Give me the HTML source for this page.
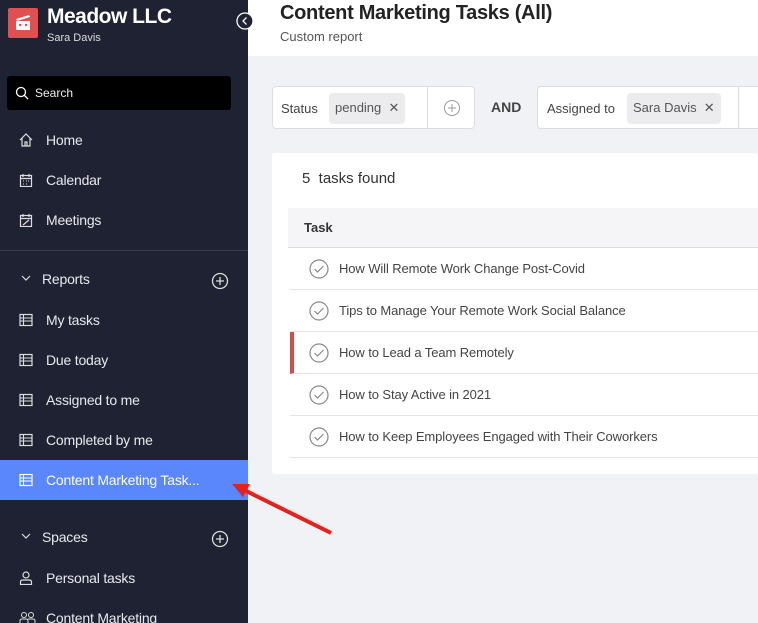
<!DOCTYPE html>
<html style="width:758px;height:623px;overflow:hidden"><head><style>
*{box-sizing:border-box;margin:0;padding:0}
body{width:758px;height:623px;overflow:hidden;font-family:"Liberation Sans",sans-serif;background:#f1f2f6;position:relative}
.sb{position:absolute;left:0;top:0;width:248px;height:623px;background:#1f2232;color:#e8e9ee;overflow:hidden}
.logo{position:absolute;left:8px;top:8px;width:30px;height:30px;background:#e05050;border-radius:2px}
.t1{position:absolute;left:47px;top:5px;font-size:21px;font-weight:bold;color:#fff;letter-spacing:-0.5px}
.t2{position:absolute;left:47px;top:32px;font-size:11px;color:#ddd}
.search{position:absolute;left:7px;top:76px;width:224px;height:34px;background:#000;border-radius:3px;font-size:12px;color:#eee;padding:10px 0 0 28px}
.it{position:absolute;left:0;width:248px;height:40px;font-size:14px;color:#e8e9ee;padding:12px 0 0 46px;letter-spacing:-0.2px}
.ic{position:absolute;left:19px;top:13px}
.sep{position:absolute;left:0;top:250px;width:248px;height:1px;background:#3a3d4c}
.hdr{position:absolute;left:248px;top:0;width:510px;height:56px;background:#fff}
.ttl{position:absolute;left:280px;top:2px;font-size:20px;font-weight:bold;color:#222;letter-spacing:-0.3px}
.sub{position:absolute;left:280px;top:29px;font-size:13px;color:#555}
.fb{position:absolute;top:86px;height:43px;background:#fff;border:1px solid #ddd;border-radius:4px;font-size:13px;color:#444}
.chip{position:absolute;top:6px;height:31px;background:#ececee;border-radius:4px;padding:7px 6px;color:#555}
.card{position:absolute;left:272px;top:153px;width:486px;height:321px;background:#fff;border-radius:3px}
.row{position:absolute;left:290px;width:468px;height:42px;border-bottom:1px solid #e4e4e4;font-size:13px;color:#444;padding:13px 0 0 49px;letter-spacing:-0.1px}
.row svg{position:absolute;left:19px;top:11px}
</style></head><body>
<div class="sb">
<div class="logo"><svg width="30" height="30"><path d="M8 11 L21 7 L22 9 L9 13Z M8 13 H22 V22 H8Z" fill="#fff"/><circle cx="12" cy="17" r="1.2" fill="#e05050"/><circle cx="18" cy="17" r="1.2" fill="#e05050"/></svg></div>
<div class="t1">Meadow LLC</div><div class="t2">Sara Davis</div>
<div class="search"><svg style="position:absolute;left:8px;top:10px" width="14" height="14"><circle cx="6" cy="6" r="4.5" stroke="#fff" fill="none" stroke-width="1.3"/><path d="M9.5 9.5 L13 13" stroke="#fff" stroke-width="1.3"/></svg>Search</div>
<div class="it" style="top:120px"><svg class="ic" width="14" height="14"><path d="M1 7 L7 1 L13 7 M3 5 V13 H11 V5 M6 13 V9 H8 V13" stroke="#ddd" fill="none" stroke-width="1.2"/></svg>Home</div>
<div class="it" style="top:160px"><svg class="ic" width="14" height="14"><rect x="1.5" y="2.5" width="11" height="11" stroke="#ddd" fill="none" stroke-width="1.2"/><path d="M4 1V4M10 1V4M1.5 5.5H12.5" stroke="#ddd" stroke-width="1.2"/><path d="M4 8h1M7 8h1M10 8h-1M4 11h1M7 11h1" stroke="#ddd"/></svg>Calendar</div>
<div class="it" style="top:200px"><svg class="ic" width="14" height="14"><rect x="1.5" y="2.5" width="11" height="11" stroke="#ddd" fill="none" stroke-width="1.2"/><path d="M4 1V4M10 1V4M1.5 5.5H12.5M4 12L10 7" stroke="#ddd" stroke-width="1.2"/></svg>Meetings</div>
<div class="sep"></div>
<div class="it" style="top:259px;padding-left:42px"><svg class="ic" style="left:21px;top:16px" width="10" height="8"><path d="M1 1L5 5L9 1" stroke="#ddd" fill="none" stroke-width="1.2"/></svg>Reports<svg style="position:absolute;left:211px;top:13px" width="18" height="18"><circle cx="9" cy="9" r="7.5" stroke="#ddd" fill="none" stroke-width="1.3"/><path d="M9 5V13M5 9H13" stroke="#ddd" stroke-width="1.3"/></svg></div>
<div class="it" style="top:300px"><svg class="ic" width="14" height="14"><rect x="1" y="1.5" width="12" height="11" stroke="#ddd" fill="none" stroke-width="1.2"/><path d="M1 5H13M1 8H13M4.5 1.5V12.5" stroke="#ddd" stroke-width="1.1"/></svg>My tasks</div>
<div class="it" style="top:340px"><svg class="ic" width="14" height="14"><rect x="1" y="1.5" width="12" height="11" stroke="#ddd" fill="none" stroke-width="1.2"/><path d="M1 5H13M1 8H13M4.5 1.5V12.5" stroke="#ddd" stroke-width="1.1"/></svg>Due today</div>
<div class="it" style="top:380px"><svg class="ic" width="14" height="14"><rect x="1" y="1.5" width="12" height="11" stroke="#ddd" fill="none" stroke-width="1.2"/><path d="M1 5H13M1 8H13M4.5 1.5V12.5" stroke="#ddd" stroke-width="1.1"/></svg>Assigned to me</div>
<div class="it" style="top:420px"><svg class="ic" width="14" height="14"><rect x="1" y="1.5" width="12" height="11" stroke="#ddd" fill="none" stroke-width="1.2"/><path d="M1 5H13M1 8H13M4.5 1.5V12.5" stroke="#ddd" stroke-width="1.1"/></svg>Completed by me</div>
<div class="it" style="top:460px;background:#5a87fb;color:#fff"><svg class="ic" width="14" height="14"><rect x="1" y="1.5" width="12" height="11" stroke="#fff" fill="none" stroke-width="1.2"/><path d="M1 5H13M1 8H13M4.5 1.5V12.5" stroke="#fff" stroke-width="1.1"/></svg>Content Marketing Task...</div>
<div class="it" style="top:517px;padding-left:42px"><svg class="ic" style="left:21px;top:16px" width="10" height="8"><path d="M1 1L5 5L9 1" stroke="#ddd" fill="none" stroke-width="1.2"/></svg>Spaces<svg style="position:absolute;left:211px;top:13px" width="18" height="18"><circle cx="9" cy="9" r="7.5" stroke="#ddd" fill="none" stroke-width="1.3"/><path d="M9 5V13M5 9H13" stroke="#ddd" stroke-width="1.3"/></svg></div>
<div class="it" style="top:558px"><svg class="ic" width="14" height="14"><circle cx="7" cy="4" r="3" stroke="#ddd" fill="none" stroke-width="1.2"/><path d="M1.5 13.5V11Q1.5 9 4 9H10Q12.5 9 12.5 11V13.5Z" stroke="#ddd" fill="none" stroke-width="1.2"/></svg>Personal tasks</div>
<div class="it" style="top:598px"><svg class="ic" width="18" height="14"><circle cx="5" cy="4" r="2.5" stroke="#ddd" fill="none"/><circle cx="12" cy="4" r="2.5" stroke="#ddd" fill="none"/><path d="M1 13V10Q1 8 3 8H7Q9 8 9 10V13M9 8H14Q16 8 16 10V13" stroke="#ddd" fill="none"/></svg>Content Marketing</div>
</div>
<div class="hdr"></div>
<svg style="position:absolute;left:236px;top:12px" width="18" height="18"><circle cx="9" cy="9" r="8" fill="#1f2232" stroke="#fff" stroke-width="1.3"/><path d="M10.5 5.5L7 9L10.5 12.5" stroke="#fff" fill="none" stroke-width="1.3"/></svg>
<div class="ttl">Content Marketing Tasks (All)</div>
<div class="sub">Custom report</div>
<div class="fb" style="left:272px;width:203px"><span style="position:absolute;left:8px;top:14px">Status</span><div class="chip" style="left:56px">pending&nbsp; ✕</div><div style="position:absolute;left:154px;top:0;width:1px;height:41px;background:#ddd"></div><svg style="position:absolute;left:170px;top:12px" width="18" height="18"><circle cx="9" cy="9" r="7.5" stroke="#999" fill="none"/><path d="M9 5V13M5 9H13" stroke="#999"/></svg></div>
<div style="position:absolute;left:491px;top:99px;font-size:14px;font-weight:bold;color:#444">AND</div>
<div class="fb" style="left:537px;width:240px"><span style="position:absolute;left:9px;top:14px">Assigned to</span><div class="chip" style="left:89px">Sara Davis&nbsp; ✕</div><div style="position:absolute;left:200px;top:0;width:1px;height:41px;background:#ddd"></div></div>
<div class="card"></div>
<div style="position:absolute;left:302px;top:170px;font-size:15px;color:#333">5&nbsp; tasks found</div>
<div style="position:absolute;left:288px;top:208px;width:470px;height:40px;background:#f5f5f7;border-bottom:1px solid #ddd;font-size:13px;font-weight:bold;color:#333;padding:12px 0 0 16px">Task</div>
<div class="row" style="top:248px"><svg width="20" height="20"><circle cx="10" cy="10" r="9" stroke="#888" fill="none" stroke-width="1.2"/><path d="M5.5 10L8.5 13L14.5 7" stroke="#888" fill="none" stroke-width="1.2"/></svg>How Will Remote Work Change Post-Covid</div>
<div class="row" style="top:290px"><svg width="20" height="20"><circle cx="10" cy="10" r="9" stroke="#888" fill="none" stroke-width="1.2"/><path d="M5.5 10L8.5 13L14.5 7" stroke="#888" fill="none" stroke-width="1.2"/></svg>Tips to Manage Your Remote Work Social Balance</div>
<div class="row" style="top:332px;border-left:4px solid #d44d4d"><svg style="left:15px" width="20" height="20"><circle cx="10" cy="10" r="9" stroke="#888" fill="none" stroke-width="1.2"/><path d="M5.5 10L8.5 13L14.5 7" stroke="#888" fill="none" stroke-width="1.2"/></svg><span style="margin-left:-4px">How to Lead a Team Remotely</span></div>
<div class="row" style="top:374px"><svg width="20" height="20"><circle cx="10" cy="10" r="9" stroke="#888" fill="none" stroke-width="1.2"/><path d="M5.5 10L8.5 13L14.5 7" stroke="#888" fill="none" stroke-width="1.2"/></svg>How to Stay Active in 2021</div>
<div class="row" style="top:416px"><svg width="20" height="20"><circle cx="10" cy="10" r="9" stroke="#888" fill="none" stroke-width="1.2"/><path d="M5.5 10L8.5 13L14.5 7" stroke="#888" fill="none" stroke-width="1.2"/></svg>How to Keep Employees Engaged with Their Coworkers</div>
<svg style="position:absolute;left:228px;top:478px" width="110" height="62"><path d="M103 55L12 10" stroke="#e8201c" stroke-width="4"/><path d="M4 6L22 6L15 19Z" fill="#e8201c"/></svg>
</body></html>
